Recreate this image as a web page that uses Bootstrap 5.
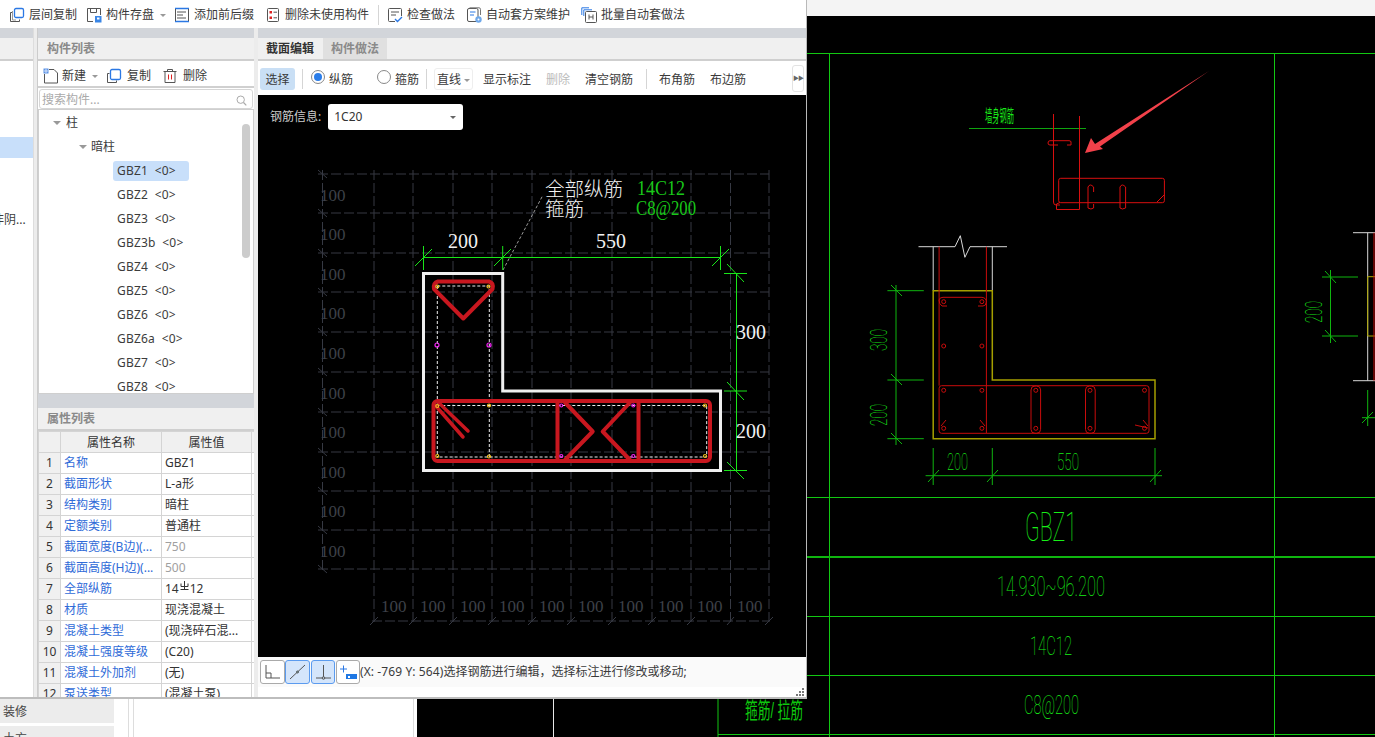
<!DOCTYPE html>
<html lang="zh">
<head>
<meta charset="utf-8">
<title>截面编辑</title>
<link href="https://cdn.jsdelivr.net/npm/bootstrap@5.3.0/dist/css/bootstrap.min.css" rel="stylesheet">
<style>
html,body{margin:0;height:737px;overflow:hidden;background:#000}
body{font-family:"Noto Sans","Noto Sans CJK SC",sans-serif;font-size:12px;line-height:1.2;color:#333}
.stage{display:grid;grid-template-columns:807px 568px;grid-template-rows:699px 38px;width:1375px;height:737px;overflow:hidden}
.win{grid-column:1;grid-row:1;background:#e9e9e9;border-right:1px solid #b9b9b9;border-bottom:2px solid #bdbdbd;display:flex;flex-direction:column;overflow:hidden}
.cadpane{grid-column:2;grid-row:1/3;background:#000;display:block}
.under{grid-column:1;grid-row:2;display:flex;background:#fff;overflow:hidden}
.topbar{height:28px;background:#fff;flex:none;display:flex;align-items:center;padding-left:9px;padding-top:2px}
.tbi{display:flex;align-items:center;gap:4px;white-space:nowrap;margin-right:11px;color:#3a3a3a}
.tbi svg{width:16px;height:16px;flex:none}
.tbi.m9{margin-right:9px}
.tbi.m8{margin-right:8px}
.cr{display:inline-block;width:0;height:0;border-left:3px solid transparent;border-right:3px solid transparent;border-top:3px solid #999}
.cr.c2{margin-left:2px}
.cr.c3{margin-left:3px}
.cr.big{border-left-width:4px;border-right-width:4px;border-top-width:4px}
.cr.dk{border-top-color:#666}
.vsep{width:1px;height:20px;background:#d5d5d5;flex:none}
.vsep.s1{margin:0 8px 0 -2px}
.vsep.s2{margin:0 8px 0 7px}
.vsep.s3{margin:0 7px}
.vsep.s4{margin:0 12px 0 13px}
.panes{flex:1;display:flex;min-height:0;background:#d2d5da;padding-top:10px}
.pleft{width:33px;flex:none;background:#fff;overflow:hidden;display:flex;flex-direction:column}
.splitv{width:5px;flex:none;background:#ececec;border-left:1px solid #ddd;border-right:1px solid #ccc;margin-top:-10px}
.splitw{width:4px;flex:none;background:#ececec;margin-top:-10px}
.pmid{width:216px;flex:none;display:flex;flex-direction:column;min-height:0;background:#fff}
.pright{flex:1;display:flex;flex-direction:column;min-width:0;background:#fff}
.phead{height:23px;flex:none;background:#f0f0f0;border-bottom:2px solid #cfcfcf;padding:2px 0 0 9px;font-weight:700;color:#8a8a8a;display:flex;align-items:center}
.midtools{height:27px;flex:none;display:flex;align-items:center;padding:5px 0 0 5px;border-bottom:2px solid #d0d0d0}
.midtools .tbi{gap:3px;margin-right:0}
.midtools .m8l{margin-left:8px}
.midtools .m11l{margin-left:11px}
.midtools .lb{margin-left:2px}
.searchb{height:20px;flex:none;border:1px solid #d6d6d6;border-radius:3px;margin:1px 0 0 1px;padding:3px 5px 0 2px;display:flex;justify-content:space-between;align-items:center;color:#aaa;width:214px}
.treebox{position:relative;flex:none;height:285px;margin-top:0;padding-top:1px;border:1px solid #cfcfcf;overflow:hidden}
.trow{height:24px;display:flex;align-items:center;white-space:nowrap;color:#3c3c3c}
.trow.l0{padding-left:14px;gap:5px}
.trow.l1{padding-left:40px;gap:4px}
.trow.l2{padding-left:74px}
.trow.l2 span{padding:3px 13px 3px 4px;border-radius:3px;letter-spacing:.2px}
.trow .on{background:#c8dffa}
.thumb{position:absolute;right:3px;top:14px;width:8px;height:134px;background:#ccc;border-radius:4px}
.bandh{height:14px;flex:none;background:#d2d5da}
.proptb{flex:1;min-height:0;overflow:hidden}
.proptb table{width:216px;table-layout:fixed;margin:0;border-color:#d4d4d4;color:#333;font-size:12px}
.proptb th,.proptb td{padding:0 3px;height:21px;line-height:19px;white-space:nowrap;overflow:hidden;border:1px solid #d4d4d4;font-weight:400}
.proptb thead th{background:#f0f0f0;text-align:center}
.proptb td:first-child{background:#f0f0f0;text-align:center;padding:0}
.proptb td:nth-child(2){color:#2f6bd8}
.proptb .dim{color:#a0a0a0}
.rebarg{vertical-align:1px;margin:0 1px}
.tabs{height:23px;flex:none;background:#f0f0f0;border-bottom:2px solid #cfcfcf;display:flex}
.tabx{width:64px;display:flex;align-items:center;justify-content:center;font-weight:700;padding-top:2px}
.tabx.off{background:#e0e0e0;color:#8a8a8a;margin-left:1px}
.rtools{height:34px;flex:none;display:flex;align-items:center;padding:2px 0 0 2px;background:#fff;position:relative;white-space:nowrap;color:#3a3a3a}
.rtools>span{padding-top:3px}
.rtools .m10{margin-left:10px}
.rtools .m15{margin-left:15px}
.rtools .gr{color:#bbb}
.selbtn{width:35px;height:22px;background:#c9dff5;border-radius:3px;display:flex;align-items:center;justify-content:center;padding-top:2px}
.rad{display:flex;align-items:center;gap:4px;padding-top:3px}
.rad.m24{margin-left:24px}
.radc{width:14px;height:14px;border:1px solid #888;border-radius:50%;background:#fff;display:flex;align-items:center;justify-content:center;margin-top:-6px}
.radc i{display:block;width:8px;height:8px;border-radius:50%;background:#2b7de9}
.ddline{width:39px;height:22px;border:1px solid #eee;border-radius:3px;display:flex;align-items:center;justify-content:space-between;padding:2px 2px 0 2px}
.more{position:absolute;left:534px;top:4px;width:12px;height:27px;border:1px solid #e3e3e3;border-radius:3px;display:flex;align-items:center;justify-content:center;font-size:6px;color:#666;letter-spacing:-1px}
.canv{flex:1;min-height:0;background:#000;position:relative}
.canv svg{display:block}
.infoline{position:absolute;left:12px;top:9px;display:flex;align-items:center;gap:7px;color:#ccc}
.infoline>span{padding-top:1px}
.infosel{width:135px;height:26px;background:#fff;border-radius:3px;color:#333;display:flex;align-items:center;justify-content:space-between;padding:1px 7px 0 6px}
.statusb{height:30px;flex:none;background:#fafafa;display:flex;align-items:center;padding-left:2px;white-space:nowrap;color:#3a3a3a}
.sbtn{width:25px;height:24px;border:1px solid #aaa;border-radius:3px;background:#fff;display:flex;align-items:center;justify-content:center;padding:0}
.sbtn.act{background:#d4e5fb;border-color:#5b9bef}
.sbtn.mg{margin-left:1px;width:24px}
.sbtn svg{width:21px;height:20px}
.coord{letter-spacing:.1px}
.gripb{height:10px;flex:none;background:#fff;position:relative}
.gripb svg{position:absolute;right:1px;bottom:0}
.sideb{width:114px;flex:none;display:flex;flex-direction:column;gap:3px}
.sideb div{background:#ececec;height:24px;padding:2px 0 0 3px;display:flex;align-items:center;color:#444;flex:none}
.lnv{width:1px;flex:none;background:#ddd}
.w14{width:14px;flex:none}.w4{width:4px;flex:none}.w279{width:279px;flex:none}.w3{width:3px;flex:none}
.blackb{flex:1;min-width:0;display:block;background:#000}
.leftrow{height:21px;flex:none;background:#c8dffa;margin-top:76px}
.leftrow2{margin-top:52px;color:#3c3c3c;white-space:nowrap;margin-left:-8px;height:20px;display:flex;align-items:center}
.grayh{height:23px;flex:none;background:#f0f0f0;border-bottom:2px solid #cfcfcf}
.thin{font-family:Roboto,"Noto Sans CJK SC",sans-serif;font-weight:100}
</style>
</head>
<body>
<div class="stage">
  <div class="win">
    <div class="topbar">
      <div class="tbi m9"><svg viewBox="0 0 16 16" fill="none"><path d="M3.5 5.5H1.5V14.500H10.500V12.500" stroke="#555"/><path d="M3.500 4V13H7" stroke="#999"/><rect x="5.500" y="1.500" width="9" height="9" rx="1.500" stroke="#2b78e4" stroke-width="1.300"/></svg>层间复制</div>
      <div class="tbi m8"><svg viewBox="0 0 16 16" fill="none"><path d="M7 14.500H1.500V1.500H14.500V8" stroke="#555"/><path d="M4.500 1.500V5.500H10.500V1.500" stroke="#555"/><rect x="9" y="9" width="6.500" height="6.500" fill="#3a86e6"/><rect x="11" y="10.500" width="2.500" height="2" fill="#fff"/></svg>构件存盘<i class="cr c2"></i></div>
      <div class="tbi"><svg viewBox="0 0 16 16" fill="none"><path d="M1 1.500H15M1 14.500H15" stroke="#2b78e4" stroke-width="1.400"/><path d="M3 5H12M3 8H9M3 11H12" stroke="#555"/><path d="M1.500 2V14M14.500 2V14" stroke="#555"/></svg>添加前后缀</div>
      <div class="tbi"><svg viewBox="0 0 16 16" fill="none"><rect x="2.500" y="1.500" width="11" height="13" rx="1" stroke="#555"/><rect x="4.500" y="4" width="2.500" height="2.500" fill="#d22"/><rect x="4.500" y="9.500" width="2.500" height="2.500" fill="#d22"/><path d="M8.500 5.200H12M8.500 10.800H12" stroke="#555"/></svg>删除未使用构件</div>
      <div class="vsep s1"></div>
      <div class="tbi"><svg viewBox="0 0 16 16" fill="none"><path d="M8 14.500H2.500A1 1 0 0 1 1.500 13.500V2.500A1 1 0 0 1 2.500 1.500H13.500A1 1 0 0 1 14.500 2.500V9" stroke="#555"/><path d="M4 5H12M4 8H9" stroke="#555"/><path d="M8 12L10.500 14.500L15 10" stroke="#2b78e4" stroke-width="1.400"/></svg>检查做法</div>
      <div class="tbi"><svg viewBox="0 0 16 16" fill="none"><rect x="1.500" y="1.500" width="10.500" height="13" rx="1.500" stroke="#555"/><path d="M3.500 .8H13A1.500 1.500 0 0 1 14.500 2.300V8" stroke="#777"/><path d="M4 5H9.500M4 8H8" stroke="#2b78e4"/><circle cx="12.500" cy="12.500" r="3.200" fill="#6fa8ea"/><circle cx="12.500" cy="12.500" r="1" fill="#fff"/></svg>自动套方案维护</div>
      <div class="tbi"><svg viewBox="0 0 16 16" fill="none"><path d="M.8 8V.8H8" stroke="#2b78e4"/><path d="M2.800 9V2.800H11" stroke="#2b78e4"/><rect x="4.500" y="4.500" width="11" height="11" rx="1" stroke="#555"/><path d="M8 7.500V12.500M12 7.500V12.500M8 10H12" stroke="#555"/></svg>批量自动套做法</div>
    </div>
    <div class="panes">
      <div class="pleft">
        <div class="grayh"></div>
        <div class="leftrow"></div>
        <div class="leftrow2">非阴...</div>
      </div>
      <div class="splitv"></div>
      <div class="pmid">
        <div class="phead">构件列表</div>
        <div class="midtools">
          <div class="tbi"><svg viewBox="0 0 16 16" fill="none"><path d="M1.500 6V15H14.500V5L11 1.500H6" stroke="#555"/><rect x=".5" y=".5" width="5" height="5" fill="#5c93e6"/><path d="M1 3H5M3 1V5" stroke="#fff" stroke-width=".7"/></svg>新建<i class="cr c3"></i></div>
          <div class="tbi m8l"><svg viewBox="0 0 16 16" fill="none"><path d="M3.500 5.500H1.500V14.500H10.500V12.500" stroke="#555"/><rect x="4.500" y="1.500" width="10" height="10" rx="1.500" stroke="#2b78e4" stroke-width="1.300"/></svg><span class="lb">复制</span></div>
          <div class="tbi m11l"><svg viewBox="0 0 16 16" fill="none"><path d="M1.500 3.500H14.500M5.500 3.500V1.500H10.500V3.500" stroke="#555"/><path d="M3 3.500V14.500H13V3.500" stroke="#555"/><path d="M6.500 6.500V11.500M9.500 6.500V11.500" stroke="#d22"/></svg><span class="lb">删除</span></div>
        </div>
        <div class="searchb"><span>搜索构件...</span><svg width="11" height="11" viewBox="0 0 11 11" fill="none"><circle cx="4.700" cy="4.700" r="3.700" stroke="#aaa"/><path d="M7.500 7.500L10.300 10.300" stroke="#aaa" stroke-width="1.200"/></svg></div>
        <div class="treebox">
          <div class="trow l0"><i class="cr big"></i>柱</div>
          <div class="trow l1"><i class="cr big"></i>暗柱</div>
          <div class="trow l2"><span class="on">GBZ1 &nbsp;&lt;0&gt;</span></div>
          <div class="trow l2"><span>GBZ2 &nbsp;&lt;0&gt;</span></div>
          <div class="trow l2"><span>GBZ3 &nbsp;&lt;0&gt;</span></div>
          <div class="trow l2"><span>GBZ3b &nbsp;&lt;0&gt;</span></div>
          <div class="trow l2"><span>GBZ4 &nbsp;&lt;0&gt;</span></div>
          <div class="trow l2"><span>GBZ5 &nbsp;&lt;0&gt;</span></div>
          <div class="trow l2"><span>GBZ6 &nbsp;&lt;0&gt;</span></div>
          <div class="trow l2"><span>GBZ6a &nbsp;&lt;0&gt;</span></div>
          <div class="trow l2"><span>GBZ7 &nbsp;&lt;0&gt;</span></div>
          <div class="trow l2"><span>GBZ8 &nbsp;&lt;0&gt;</span></div>
          <div class="thumb"></div>
        </div>
        <div class="bandh"></div>
        <div class="phead">属性列表</div>
        <div class="proptb">
          <table class="table table-bordered">
            <colgroup><col style="width:22px"><col style="width:101px"><col style="width:90px"><col style="width:3px"></colgroup>
            <thead><tr><th></th><th>属性名称</th><th>属性值</th><th></th></tr></thead>
            <tbody>
              <tr><td>1</td><td>名称</td><td>GBZ1</td><td></td></tr>
              <tr><td>2</td><td>截面形状</td><td>L-a形</td><td></td></tr>
              <tr><td>3</td><td>结构类别</td><td>暗柱</td><td></td></tr>
              <tr><td>4</td><td>定额类别</td><td>普通柱</td><td></td></tr>
              <tr><td>5</td><td>截面宽度(B边)(...</td><td class="dim">750</td><td></td></tr>
              <tr><td>6</td><td>截面高度(H边)(...</td><td class="dim">500</td><td></td></tr>
              <tr><td>7</td><td>全部纵筋</td><td>14<svg class="rebarg" width="9" height="12" viewBox="0 0 9 12" fill="none" stroke="#333"><path d="M4.500 1V9M1 3.500V6.500H8V3.500M.5 9.500H8.500"/></svg>12</td><td></td></tr>
              <tr><td>8</td><td>材质</td><td>现浇混凝土</td><td></td></tr>
              <tr><td>9</td><td>混凝土类型</td><td>(现浇碎石混...</td><td></td></tr>
              <tr><td>10</td><td>混凝土强度等级</td><td>(C20)</td><td></td></tr>
              <tr><td>11</td><td>混凝土外加剂</td><td>(无)</td><td></td></tr>
              <tr><td>12</td><td>泵送类型</td><td>(混凝土泵)</td><td></td></tr>
            </tbody>
          </table>
        </div>
      </div>
      <div class="splitw"></div>
      <div class="pright">
        <div class="tabs"><div class="tabx">截面编辑</div><div class="tabx off">构件做法</div></div>
        <div class="rtools">
          <div class="selbtn">选择</div>
          <div class="vsep s2"></div>
          <div class="rad"><span class="radc"><i></i></span>纵筋</div>
          <div class="rad m24"><span class="radc"></span>箍筋</div>
          <div class="vsep s3"></div>
          <div class="ddline">直线<i class="cr"></i></div>
          <span class="m10">显示标注</span>
          <span class="m15 gr">删除</span>
          <span class="m15">清空钢筋</span>
          <div class="vsep s4"></div>
          <span>布角筋</span>
          <span class="m15">布边筋</span>
          <div class="more">▶▶</div>
        </div>
        <div class="canv">
          <svg width="549" height="562" viewBox="258 95 549 562" font-family="'Liberation Serif','Noto Sans CJK SC',serif">
            <g stroke="#363943" fill="none" stroke-dasharray="10 3">
              <path d="M318 174H769M318 213H769M318 253H769M318 292H769M318 332H769M318 372H769M318 412H769M318 452H769M318 491H769M318 530H769M318 569H769M372 621H769"/>
              <path d="M322.500 170V572M374 170V622M413 170V622M453 170V622M492 170V622M532 170V622M571 170V622M612 170V622M652 170V622M691 170V622M730.500 170V622M769 170V622"/>
            </g>
            <path d="M318 170L327 178M318 209L327 217M318 249L327 257M318 288L327 296M318 328L327 336M318 368L327 376M318 408L327 416M318 448L327 456M318 487L327 495M318 526L327 534M318 565L327 573M370 625L378 617M409 625L417 617M449 625L457 617M488 625L496 617M528 625L536 617M567 625L575 617M608 625L616 617M648 625L656 617M687 625L695 617M727 625L734 617M765 625L773 617" stroke="#363943"/>
            <g fill="#3d4048" font-size="17">
              <text x="320" y="201">100</text><text x="320" y="240">100</text><text x="320" y="280">100</text><text x="320" y="319">100</text><text x="320" y="359">100</text><text x="320" y="399">100</text><text x="320" y="438">100</text><text x="320" y="478">100</text><text x="320" y="517">100</text><text x="320" y="557">100</text>
              <text x="381" y="612">100</text><text x="420" y="612">100</text><text x="460" y="612">100</text><text x="499" y="612">100</text><text x="539" y="612">100</text><text x="578" y="612">100</text><text x="618" y="612">100</text><text x="658" y="612">100</text><text x="697" y="612">100</text><text x="737" y="612">100</text>
            </g>
            <path d="M503 270L543 195" stroke="#999" stroke-dasharray="3 2" fill="none"/>
            <g stroke="#19e619" fill="none">
              <path d="M423.500 257.500H720.500M423.500 246V270M502.700 246V270M720.500 246V270M415 266L432 249M494 266L511 249M712 266L729 249"/>
              <path d="M736.500 273V470.500M724 273.500H747M724 391H747M724 470.500H747M727 264L744 282M727 382L744 400M727 462L744 479"/>
            </g>
            <path d="M423.500 273.500H502.700V391H720.500V470.500H423.500Z" fill="none" stroke="#efefef" stroke-width="3"/>
            <path d="M437.300 286H489.300V457M437.300 286V457M437.300 405.500H706.700V457H437.300" fill="none" stroke="#eee" stroke-dasharray="3 2"/>
            <g fill="none" stroke="#c8171f" stroke-linejoin="round" stroke-linecap="round">
              <path stroke-width="4" d="M438 281.500H489Q494 283 492.500 289L463.300 318.500L434 289Q433 283 438 281.500Z"/>
              <rect x="433.500" y="401" width="276.500" height="60" rx="4" stroke-width="4"/>
              <path stroke-width="4" d="M557.500 402V460M638.500 402V460M565 402.500L592.700 431.500L565 460M630 402.500L602.700 431.500L630 460"/>
              <path stroke-width="3.500" d="M435 405L463 437M438.500 402.500L468 431"/>
            </g>
            <g fill="none" stroke="#f4c020" stroke-width="1.200">
              <circle cx="437.300" cy="286.500" r="1.500"/><circle cx="488.500" cy="286.500" r="1.500"/><circle cx="437.300" cy="406" r="1.500"/><circle cx="489" cy="405.500" r="1.500"/><circle cx="705" cy="405.500" r="1.500"/><circle cx="437.300" cy="456" r="1.500"/><circle cx="489" cy="456.500" r="1.500"/><circle cx="705" cy="456" r="1.500"/>
            </g>
            <g fill="none" stroke="#f020f0" stroke-width="1.200">
              <circle cx="437" cy="345" r="2"/><circle cx="489" cy="345" r="2"/><circle cx="561.300" cy="405.500" r="1.500"/><circle cx="633.300" cy="405.500" r="1.500"/><circle cx="561.300" cy="456" r="1.500"/><circle cx="633.300" cy="456" r="1.500"/>
            </g>
            <g fill="#f2f2f2" font-size="20">
              <text x="448" y="248">200</text><text x="596" y="248">550</text><text x="736" y="339">300</text><text x="736" y="438">200</text>
              <text x="545" y="196" font-size="19.500" font-weight="300">全部纵筋</text><text x="545" y="216" font-size="19.500" font-weight="300">箍筋</text>
              <text x="637" y="195" fill="#19c819" textLength="48" lengthAdjust="spacingAndGlyphs">14C12</text><text x="636" y="215" fill="#19c819" textLength="60" lengthAdjust="spacingAndGlyphs">C8@200</text>
            </g>
          </svg>
          <div class="infoline"><span>钢筋信息:</span><div class="infosel"><span>1C20</span><i class="cr dk"></i></div></div>
        </div>
        <div class="statusb">
          <button type="button" class="btn sbtn"><svg viewBox="0 0 21 20" fill="none" stroke="#555"><path d="M4 3V16H18M4 11H9V16"/></svg></button>
          <button type="button" class="btn sbtn act"><svg viewBox="0 0 21 20" fill="none" stroke="#555"><path d="M3 17L18 3"/><circle cx="10.500" cy="10" r="1" fill="#7aa"/></svg></button>
          <button type="button" class="btn sbtn act mg"><svg viewBox="0 0 21 20" fill="none" stroke="#555"><path d="M3 16H18M10.500 3V16"/><circle cx="10.500" cy="16" r="1.300" fill="#bcd"/></svg></button>
          <button type="button" class="btn sbtn mg"><svg viewBox="0 0 21 20" fill="none"><path d="M2 7H9M5.500 3.500V10.500" stroke="#2b78e4"/><rect x="8" y="12" width="11" height="5" fill="#1f78e4"/><rect x="10" y="14" width="2" height="2" fill="#fff"/></svg></button>
          <span><span class="coord">(X: -769 Y: 564)</span>选择钢筋进行编辑，选择标注进行修改或移动;</span>
        </div>
        <div class="gripb"><svg width="9" height="9" viewBox="0 0 9 9" fill="#777"><rect x="6" y="0" width="2" height="2"/><rect x="3" y="3" width="2" height="2"/><rect x="6" y="3" width="2" height="2"/><rect x="0" y="6" width="2" height="2"/><rect x="3" y="6" width="2" height="2"/><rect x="6" y="6" width="2" height="2"/></svg></div>
      </div>
    </div>
  </div>

  <div class="under">
    <div class="sideb"><div>装修</div><div>土方</div></div>
    <div class="w14"></div><div class="lnv"></div>
    <div class="w4"></div><div class="lnv"></div>
    <div class="w279"></div><div class="lnv"></div>
    <div class="w3"></div>
    <svg class="blackb" viewBox="417 699 390 38" width="390" height="38" font-family="'Liberation Sans','Noto Sans CJK SC',sans-serif">
      <path d="M553.500 699V737" stroke="#e8e8e8"/>
      <path d="M718 699V737M718 734.500H807" stroke="#13c513" fill="none"/>
      <text x="745" y="718" fill="#0ec80e" font-size="22" textLength="58" lengthAdjust="spacingAndGlyphs">箍筋/ 拉筋</text>
    </svg>
  </div>

  <svg class="cadpane" width="568" height="737" viewBox="807 0 568 737" font-family="'Liberation Sans','Noto Sans CJK SC',sans-serif">
    <rect x="807" y="0" width="568" height="16" fill="#f4f4f4"/>
    <path d="M807 53.500H1375M807 497.500H1375M807 616.500H1375M807 675.500H1375M807 734.500H1375M829.500 53V737M1274.500 53V737" stroke="#12c812" fill="none"/>
    <path d="M807 557H1375" stroke="#0fb50f" stroke-width="2"/>
    <text x="985" y="122" fill="#19e619" font-size="17" textLength="29" lengthAdjust="spacingAndGlyphs">墙身钢筋</text>
    <path d="M969 128.500H1086" stroke="#0fa50f"/>
    <g fill="none" stroke="#d80f0f">
      <path d="M1053.500 114V202Q1053.500 205 1056 205H1060M1079.500 116V209.500H1056.500V204L1060 202.500"/>
      <rect x="1058.700" y="178.300" width="105.700" height="24.400" rx="2"/>
      <path d="M1071 145H1067M1071 145V142Q1071 140.700 1069 140.700H1050Q1048 140.700 1048 143Q1048 145 1050 145H1058"/>
      <path d="M1088 204V187Q1090 183 1093.600 187V192M1093.600 204V208Q1091 210 1088 208V204"/>
      <path d="M1120 204V187Q1122 183 1125.600 187V208Q1122 210 1120 208V204"/>
      <path d="M1157 202L1164 195"/>
    </g>
    <polygon points="1085,153 1091,138 1095,144 1209,71 1100,146.500 1103,149" fill="#f2414a"/>
    <path d="M918.500 246.700H955L960.300 235.700L964.900 257.300L970 246.700H1007M933.200 246.700V290.700M992.300 246.700V290.700" fill="none" stroke="#d8d8d8"/>
    <path d="M933.200 290.700H992.300V380H1155V438.700H933.200Z" fill="none" stroke="#a59f00" stroke-width="1.500"/>
    <g fill="none" stroke="#c80c0c">
      <path d="M939.100 246.700V385.700M986.400 246.700V433"/>
      <rect x="939.100" y="385.700" width="209.900" height="47.600" rx="2.500"/>
      <path d="M947 306H942Q939 304 939 300Q939.500 297.300 943 297.300H982Q986.400 298 986.400 302Q986 306 983 306H978"/>
      <rect x="1031" y="386" width="9.600" height="47.300" rx="4"/>
      <rect x="1085.500" y="386" width="9.700" height="47.300" rx="4"/>
      <path d="M941 426L946 420M985 426L980 420M1148 428L1135 425M1143 420L1148 426"/>
      <circle cx="943.700" cy="301.700" r="2"/><circle cx="981.900" cy="301.700" r="2"/><circle cx="943.700" cy="346" r="2"/><circle cx="981.900" cy="346" r="2"/><circle cx="943.700" cy="390.300" r="2"/><circle cx="981.900" cy="390.300" r="2"/><circle cx="1035.800" cy="390.300" r="2"/><circle cx="1090" cy="390.300" r="2"/><circle cx="1144.500" cy="390.300" r="2"/><circle cx="943.700" cy="428.300" r="2"/><circle cx="981.900" cy="428.300" r="2"/><circle cx="1035.800" cy="428.300" r="2"/><circle cx="1090" cy="428.300" r="2"/><circle cx="1144.500" cy="428.300" r="2"/>
    </g>
    <g fill="none" stroke="#0fb50f">
      <path d="M896 285V445M887.400 290.700H923.800M887.400 380H923.800M887.400 438.700H923.800M891 285L902 296M891 374L902 385M891 433L902 444"/>
      <path d="M925.600 475.700H1162M933.200 448V485M992.300 448V485M1155 448V485M928 482L939 470M987 482L998 470M1150 482L1161 470"/>
      <path d="M1330.500 270V343M1322 277H1358M1322 336H1358M1325 271L1336 283M1325 330L1336 342"/>
      <path d="M1367.700 390V426M1362 417.700H1375M1362 423L1373 412"/>
    </g>
    <g fill="#18e818" font-size="23" class="thin">
      <text transform="translate(887 351) rotate(-90)" textLength="22" lengthAdjust="spacingAndGlyphs">300</text>
      <text transform="translate(887 426) rotate(-90)" textLength="22" lengthAdjust="spacingAndGlyphs">200</text>
      <text transform="translate(1322 323) rotate(-90)" textLength="22" lengthAdjust="spacingAndGlyphs">200</text>
      <text x="947" y="470" textLength="21" lengthAdjust="spacingAndGlyphs">200</text>
      <text x="1057" y="470" textLength="22" lengthAdjust="spacingAndGlyphs">550</text>
    </g>
    <path d="M1353 232.700H1375M1353 380.700H1375M1367.700 232.700V380.700" stroke="#d8d8d8" fill="none"/>
    <path d="M1375 276.700H1367.700V336H1375" stroke="#b0a800" fill="none"/>
    <path d="M1374 232.700V380.700" stroke="#c80c0c"/>
    <g fill="#18f018" class="thin">
      <text x="1025" y="541" font-size="40" textLength="52" lengthAdjust="spacingAndGlyphs">GBZ1</text>
      <text x="997" y="596" font-size="27" textLength="108" lengthAdjust="spacingAndGlyphs">14.930~96.200</text>
      <text x="1030" y="655" font-size="25" textLength="42" lengthAdjust="spacingAndGlyphs">14C12</text>
      <text x="1024" y="714" font-size="26" textLength="55" lengthAdjust="spacingAndGlyphs">C8@200</text>
    </g>
  </svg>
</div>
<script src="https://cdn.jsdelivr.net/npm/bootstrap@5.3.0/dist/js/bootstrap.bundle.min.js"></script>
</body>
</html>
